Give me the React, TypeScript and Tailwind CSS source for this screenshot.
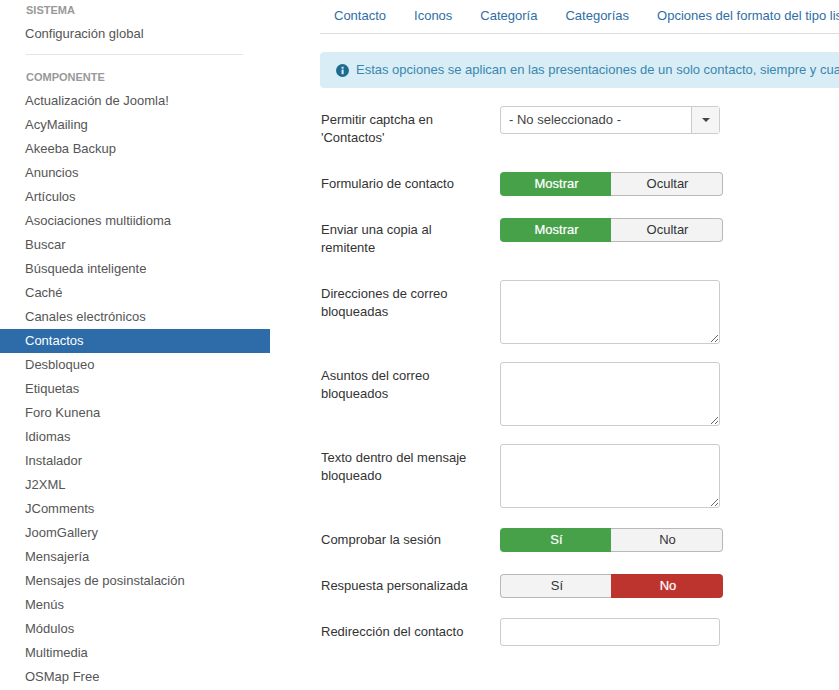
const items = ["Actualización de Joomla!","AcyMailing","Akeeba Backup","Anuncios","Artículos","Asociaciones multiidioma","Buscar","Búsqueda inteligente","Caché","Canales electrónicos","Contactos","Desbloqueo","Etiquetas","Foro Kunena","Idiomas","Instalador","J2XML","JComments","JoomGallery","Mensajería","Mensajes de posinstalación","Menús","Módulos","Multimedia","OSMap Free"];
const tabs = ["Contacto","Iconos","Categoría","Categorías","Opciones del formato del tipo lista"];

function Toggle({ a, b, active }: { a: string; b: string; active: "a" | "b" }) {
  return (
    <div className="flex w-[223px] h-6 text-[13px]">
      <div className={active === "a" ? "w-[111px] pl-0.5 flex items-center justify-center rounded-l-[4px] bg-[#46a149] text-white [text-shadow:0_0_1px_rgba(255,255,255,0.5)]" : "w-[111px] pl-0.5 flex items-center justify-center rounded-l-[4px] bg-[#f3f3f3] border border-r-0 border-[#b8b8b8] text-[#333]"}>{a}</div>
      <div className={active === "b" ? "w-[112px] pl-0.5 flex items-center justify-center rounded-r-[4px] bg-[#bd342f] text-white [text-shadow:0_0_1px_rgba(255,255,255,0.5)]" : "w-[112px] pl-0.5 flex items-center justify-center rounded-r-[4px] bg-[#f3f3f3] border border-l-0 border-[#b8b8b8] text-[#333]"}>{b}</div>
    </div>
  );
}

function Row({ label, top, className, children }: { label: string; top: string; className: string; children: React.ReactNode }) {
  return (
    <div className={"flex " + className}>
      <div className={"w-[180px] shrink-0 pr-6 pl-px leading-[18px] text-[#333] text-[13px] " + top}>{label}</div>
      {children}
    </div>
  );
}

function Area() {
  return (
    <div className="relative w-[220px] h-16 rounded-[3px] border border-[#ccc] bg-white">
      <svg className="absolute right-0 bottom-0" width="9" height="9" viewBox="0 0 9 9" fill="none" stroke="#666" strokeWidth="1">
        <path d="M1 8 L8 1 M5 8 L8 5" />
      </svg>
    </div>
  );
}

export default function App() {
  return (
    <div className="flex w-[839px] h-[690px] overflow-hidden bg-white font-['Liberation_Sans',Arial,sans-serif] text-[13px]">
      <aside className="w-[270px] shrink-0 text-[#555]">
        <div className="pl-[26px] pt-[4px] h-[12px] leading-[12px] text-[11px] font-bold text-[#999]">SISTEMA</div>
        <div className="pl-[25px] mt-[10px] h-6 leading-6">Configuración global</div>
        <div className="ml-[26px] mr-[27px] mt-[8px] border-t border-[#e5e5e5]" />
        <div className="pl-[26px] mt-[16px] h-3 leading-3 text-[11px] font-bold text-[#999]">COMPONENTE</div>
        <ul className="mt-[6px]">
          {items.map((t) => (
            <li key={t} className={t === "Contactos" ? "h-6 leading-[23px] pl-[25px] bg-[#2d6ca9] text-white" : "h-6 leading-[23px] pl-[25px]"}>{t}</li>
          ))}
        </ul>
      </aside>
      <main className="ml-[50px] w-[569px] shrink-0">
        <nav className="flex h-[34px] border-b border-[#ddd] whitespace-nowrap text-[#2f6ea5] leading-[31px]">
          {tabs.map((t) => <span key={t} className="px-[14px]">{t}</span>)}
        </nav>
        <div className="mt-[18px] h-9 flex items-center gap-[7px] pl-4 rounded-l-[4px] bg-[#d9edf7] text-[#3a87ad] whitespace-nowrap overflow-hidden">
          <svg width="13" height="13" viewBox="0 0 14 14" className="shrink-0">
            <circle cx="7" cy="7" r="7" fill="#1f6a8f" />
            <rect x="6" y="6" width="2.2" height="5" fill="#d9edf7" />
            <rect x="6" y="3" width="2.2" height="2" fill="#d9edf7" />
          </svg>
          <span>Estas opciones se aplican en las presentaciones de un solo contacto, siempre y cuando no se haya definido</span>
        </div>
        <div className="mt-[18px]">
          <Row label="Permitir captcha en 'Contactos'" top="pt-[5px]" className="h-[66px]">
            <div className="flex w-[220px] h-7 rounded-[3px] border border-[#ccc] text-[#444]">
              <div className="flex-1 pl-2 leading-[25px]">- No seleccionado -</div>
              <div className="w-7 flex items-center justify-center border-l border-[#ccc] bg-[#f5f5f5]">
                <div className="w-0 h-0 border-x-4 border-x-transparent border-t-4 border-t-[#444]" />
              </div>
            </div>
          </Row>
          <Row label="Formulario de contacto" top="pt-[3px]" className="h-[46px]"><Toggle a="Mostrar" b="Ocultar" active="a" /></Row>
          <Row label="Enviar una copia al remitente" top="pt-[3px]" className="h-[62px]"><Toggle a="Mostrar" b="Ocultar" active="a" /></Row>
          <Row label="Direcciones de correo bloqueadas" top="pt-[5px]" className="h-[82px]"><Area /></Row>
          <Row label="Asuntos del correo bloqueados" top="pt-[5px]" className="h-[82px]"><Area /></Row>
          <Row label="Texto dentro del mensaje bloqueado" top="pt-[5px]" className="h-[84px]"><Area /></Row>
          <Row label="Comprobar la sesión" top="pt-[3px]" className="h-[46px]"><Toggle a="Sí" b="No" active="a" /></Row>
          <Row label="Respuesta personalizada" top="pt-[3px]" className="h-[44px]"><Toggle a="Sí" b="No" active="b" /></Row>
          <Row label="Redirección del contacto" top="pt-[5px]" className="h-7">
            <div className="w-[220px] h-7 rounded-[3px] border border-[#ccc] bg-white" />
          </Row>
        </div>
      </main>
    </div>
  );
}
